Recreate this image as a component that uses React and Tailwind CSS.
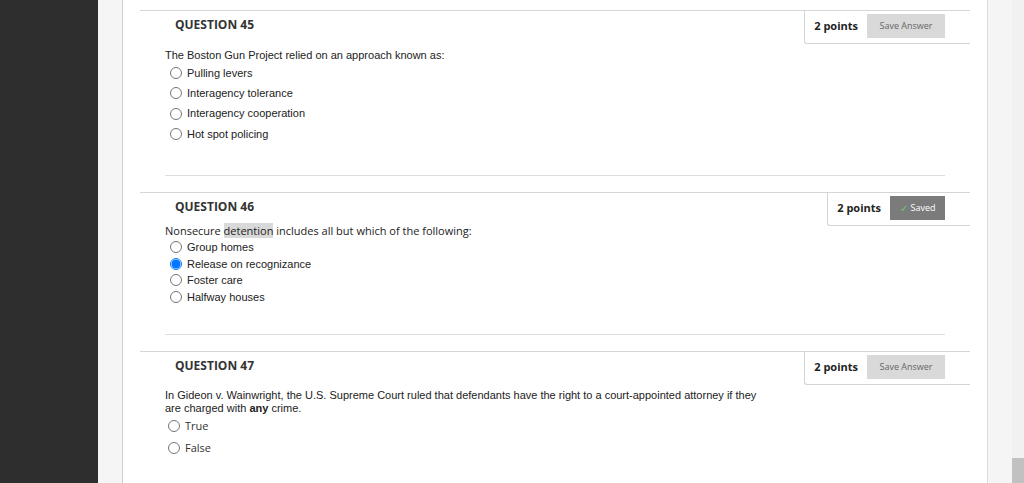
import React from "react";

const Radio = ({ checked }) =>
  checked ? (
    <span className="flex h-[12px] w-[12px] shrink-0 items-center justify-center rounded-full border border-[#0075ff] bg-white">
      <span className="h-[6px] w-[6px] rounded-full bg-[#0075ff] ring-[1.5px] ring-[#0075ff]" />
    </span>
  ) : (
    <span className="h-[12px] w-[12px] shrink-0 rounded-full border border-[#767676] bg-white" />
  );

const PointsBox = ({ saved }) => (
  <div className="flex shrink-0 items-center gap-[9px] rounded-bl-[3px] border-b border-l border-[#d4d4d4] pt-[3px] pb-[5px] pl-[9px] pr-[25px]">
    <span className="whitespace-nowrap font-['Open_Sans'] text-[11px] font-bold text-[#222]">2 points</span>
    {saved ? (
      <span className="flex h-[24px] w-[55px] items-center justify-center gap-[3px] bg-[#7b7b7b] font-['Open_Sans'] text-[9px] text-white">
        <span className="text-[10px] text-[#5fd35f]">✓</span>
        Saved
      </span>
    ) : (
      <span className="flex h-[24px] w-[78px] items-center justify-center whitespace-nowrap bg-[#d9d9d9] font-['Open_Sans'] text-[9px] text-[#666]">
        Save Answer
      </span>
    )}
  </div>
);

const Header = ({ num, saved }) => (
  <div className="flex items-start justify-between">
    <h3 className="pl-[35px] pt-[4.5px] font-['Open_Sans'] text-[12px] font-bold text-[#333]">
      QUESTION {num}
    </h3>
    <PointsBox saved={saved} />
  </div>
);

export default function App() {
  return (
    <div className="flex h-[483px] w-[1024px] overflow-hidden bg-white">
      <aside className="w-[98px] shrink-0 bg-[#2e2e2e]" />
      <div className="w-[25px] shrink-0 border-r border-[#cfcfcf] bg-[#f5f5f5]" />

      <main className="w-[864px] shrink-0 bg-white pl-[17px] pt-[10px]">
        {/* question 45 */}
        <section className="w-[830px] border-t border-[#d6d6d6]">
          <Header num="45" />
          <div className="pl-[25px]">
            <p className="mt-[3px] font-['Liberation_Sans'] text-[11px] leading-[16px] text-[#222]">
              The Boston Gun Project relied on an approach known as:
            </p>
            {["Pulling levers", "Interagency tolerance", "Interagency cooperation", "Hot spot policing"].map((o) => (
              <label key={o} className="flex h-[20.3px] items-center gap-[5px] pl-[5px] font-['Liberation_Sans'] text-[11px] text-[#222]">
                <Radio />
                {o}
              </label>
            ))}
          </div>
          <div className="mx-[25px] mt-[31px] border-b border-[#dedede]" />
        </section>

        {/* question 46 */}
        <section className="mt-[16px] w-[830px] border-t border-[#d6d6d6]">
          <Header num="46" saved />
          <div className="pl-[25px]">
            <p className="-mt-[3px] font-['Open_Sans'] text-[11px] leading-[16px] text-[#222]">
              Nonsecure <span className="bg-[#d9d9d9]">detention</span> includes all but which of the following:
            </p>
            {[
              ["Group homes", false],
              ["Release on recognizance", true],
              ["Foster care", false],
              ["Halfway houses", false],
            ].map(([o, c]) => (
              <label key={o} className="flex h-[16.5px] items-center gap-[5px] pl-[5px] font-['Liberation_Sans'] text-[11px] text-[#222]">
                <Radio checked={c} />
                {o}
              </label>
            ))}
          </div>
          <div className="mx-[25px] mt-[29px] border-b border-[#dedede]" />
        </section>

        {/* question 47 */}
        <section className="mt-[16px] w-[830px] border-t border-[#d6d6d6]">
          <Header num="47" />
          <div className="pl-[25px]">
            <p className="mt-[4px] max-w-[600px] font-['Liberation_Sans'] text-[11px] leading-[13px] text-[#222]">
              In Gideon v. Wainwright, the U.S. Supreme Court ruled that defendants have the right to a court-appointed attorney if they
              are charged with <b>any</b> crime.
            </p>
            {["True", "False"].map((o) => (
              <label key={o} className="flex h-[22px] items-center gap-[5px] pl-[3px] font-['Open_Sans'] text-[11px] text-[#333]">
                <Radio />
                {o}
              </label>
            ))}
          </div>
        </section>
      </main>

      <div className="w-[25px] shrink-0 border-l border-[#dcdcdc] bg-[#f5f5f5]" />
      <div className="flex w-[12px] shrink-0 flex-col bg-[#f1f1f1]">
        <div className="h-[458px]" />
        <div className="flex-1 bg-[#c1c1c1]" />
      </div>
    </div>
  );
}
